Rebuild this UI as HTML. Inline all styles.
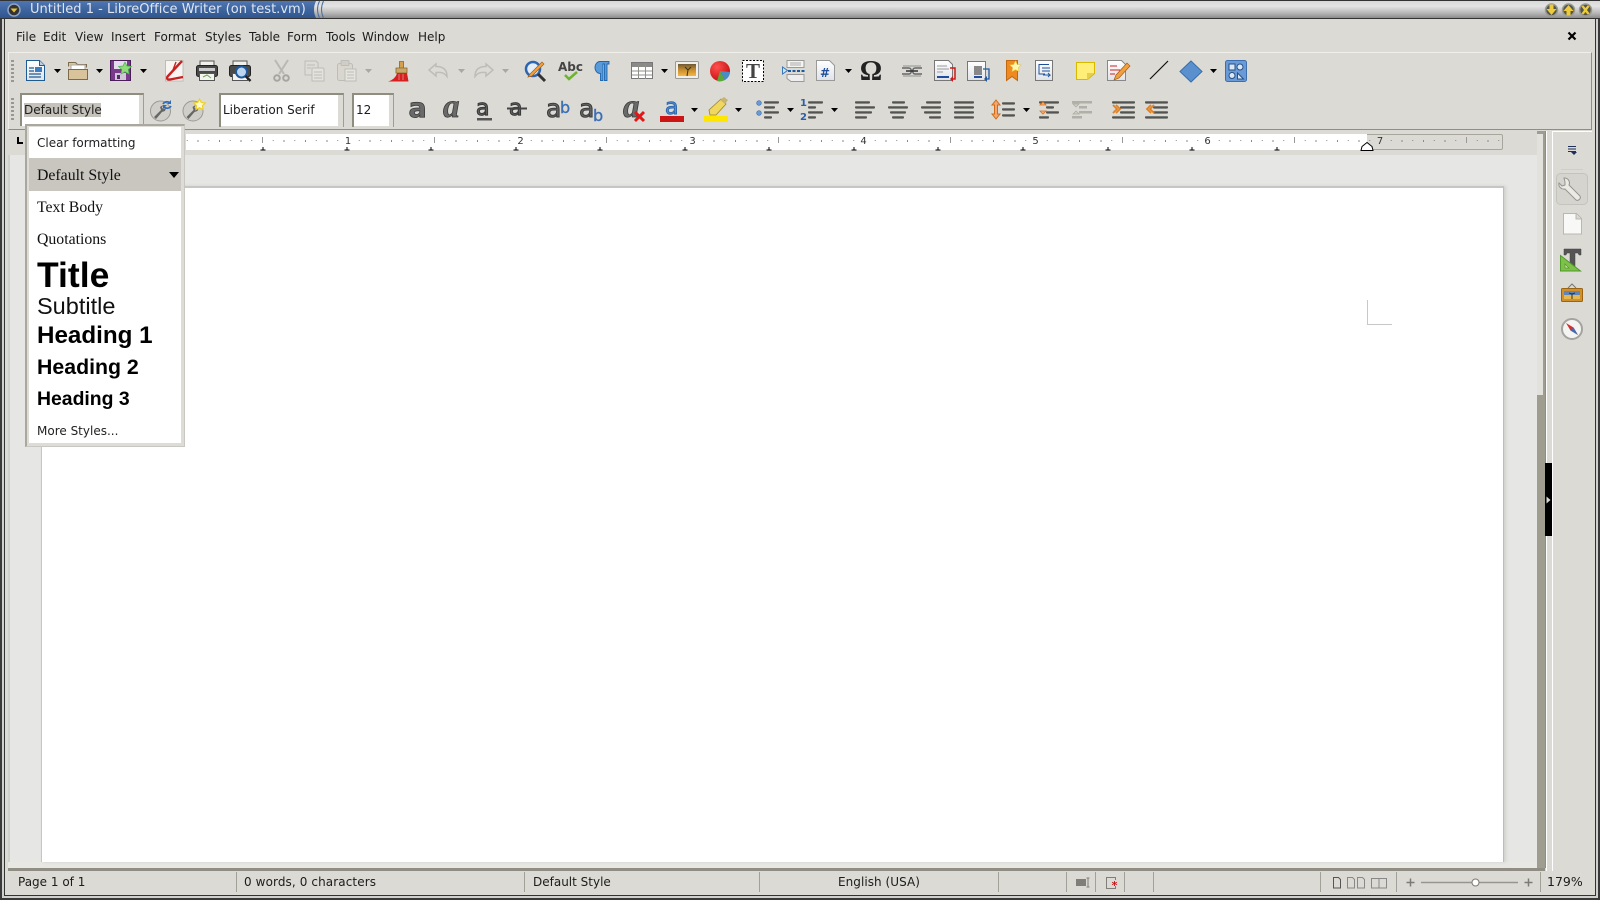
<!DOCTYPE html>
<html><head><meta charset="utf-8"><title>Untitled 1 - LibreOffice Writer</title>
<style>
html,body{margin:0;padding:0;width:1600px;height:900px;overflow:hidden;background:#3a3a3a}
body{position:relative;font-family:"DejaVu Sans",sans-serif;font-size:12px;color:#1c1c1c}
.a{position:absolute}
.t{position:absolute;white-space:nowrap;line-height:20px;height:20px}
.s{font-family:"Liberation Serif",serif;font-size:15.800px;color:#111}
.b{font-family:"Liberation Sans",sans-serif;font-weight:bold;color:#000}
.sep{position:absolute;top:872px;height:20px;width:1px;background:#a3a197}
svg{position:absolute;left:0;top:0}
</style></head><body>
<!-- window frame -->
<div class="a" style="left:2px;top:18px;width:1596px;height:880px;background:#d0d0cc"></div>
<div class="a" style="left:4px;top:18px;width:1592px;height:878px;background:#333"></div>
<div class="a" style="left:5px;top:19px;width:1590px;height:876px;background:#dbdad5"></div>
<!-- title bar -->
<div class="a" style="left:0;top:0;width:1600px;height:19px;background:linear-gradient(#d8d8d8,#e4e4e4 30%,#b8b8b8 70%,#8c8c8c);border-top:1px solid #333;border-bottom:1px solid #333;box-sizing:border-box"></div>
<svg width="340" height="20" viewBox="0 0 340 20" style="width:340px;height:20px">
<defs><linearGradient id="tb" x1="0" y1="0" x2="0" y2="1"><stop offset="0" stop-color="#4f76b2"/><stop offset=".5" stop-color="#3f659f"/><stop offset="1" stop-color="#2f5590"/></linearGradient></defs>
<path d="M0 1H316q-4 8.500 0 17H0z" fill="url(#tb)"/>
<path d="M319.500 1q-4 8.500 0 17M323.500 1q-4 8.500 0 17" stroke="#4a6ea6" fill="none"/>
</svg>
<div class="t" style="left:30px;top:0px;font-size:13px;color:#dfe6f2;letter-spacing:.02px">Untitled 1 - LibreOffice Writer (on test.vm)</div>
<!-- menu -->
<div class="t" style="left:16px;top:27px">File</div>
<div class="t" style="left:43px;top:27px">Edit</div>
<div class="t" style="left:75px;top:27px">View</div>
<div class="t" style="left:111px;top:27px">Insert</div>
<div class="t" style="left:154px;top:27px">Format</div>
<div class="t" style="left:205px;top:27px">Styles</div>
<div class="t" style="left:249px;top:27px">Table</div>
<div class="t" style="left:287px;top:27px">Form</div>
<div class="t" style="left:326px;top:27px">Tools</div>
<div class="t" style="left:362px;top:27px">Window</div>
<div class="t" style="left:418px;top:27px">Help</div>
<!-- toolbar frame -->
<div class="a" style="left:8px;top:52px;width:1584px;height:78px;box-sizing:border-box;border-top:1px solid #f0efea;border-left:1px solid #efeee9;border-right:1px solid #8f8d84;border-bottom:1px solid #8f8d84"></div>
<!-- combos -->
<div class="a" style="left:20px;top:93px;width:124px;height:33px;background:#dcdbd6;box-sizing:border-box;border-left:2px solid #8f8c80;border-top:2px solid #8f8c80;border-right:1px solid #a09e92"></div>
<div class="a" style="left:22px;top:95px;width:117px;height:31px;background:#fff"></div>
<div class="a" style="left:24px;top:103px;width:77px;height:14px;background:#c5c2bb"></div>
<div class="t" style="left:24px;top:100px">Default Style</div>
<div class="a" style="left:219px;top:93px;width:125px;height:34px;background:#dcdbd6;box-sizing:border-box;border-left:2px solid #8f8c80;border-top:2px solid #8f8c80;border-right:1px solid #a09e92"></div>
<div class="a" style="left:221px;top:95px;width:117px;height:31px;background:#fff"></div>
<div class="t" style="left:223px;top:100px">Liberation Serif</div>
<div class="a" style="left:352px;top:93px;width:42px;height:34px;background:#dcdbd6;box-sizing:border-box;border-left:2px solid #8f8c80;border-top:2px solid #8f8c80;border-right:1px solid #a09e92"></div>
<div class="a" style="left:354px;top:95px;width:35px;height:31px;background:#fff"></div>
<div class="t" style="left:356px;top:100px">12</div>
<!-- doc area -->
<div class="a" style="left:8px;top:155px;width:1529px;height:707px;background:#e6e6e4"></div>
<div class="a" style="left:8px;top:155px;width:2px;height:707px;background:#cfcfcb"></div>
<div class="a" style="left:8px;top:862px;width:1537px;height:6px;background:#e8e7e2"></div>
<div class="a" style="left:8px;top:868px;width:1537px;height:3px;background:#8f8d84"></div>
<div class="a" style="left:41px;top:186px;width:1463px;height:676px;background:#fff;box-sizing:border-box;border-left:1px solid #c6c6c2;border-top:2px solid #c6c6c2;border-right:1px solid #bcbcb8;box-shadow:2px 0 3px #d0d0cc"></div>
<div class="a" style="left:1367px;top:300px;width:25px;height:25px;box-sizing:border-box;border-left:1px solid #c8c8c8;border-bottom:1px solid #c8c8c8"></div>
<!-- ruler -->
<div class="a" style="left:186px;top:134px;width:1181px;height:16px;background:#fff"></div>
<div class="a" style="left:1367px;top:134px;width:136px;height:16px;box-sizing:border-box;border:1px solid #a8a69c;border-left:0;border-radius:0 2px 2px 0"></div>
<!-- scroll column -->
<div class="a" style="left:1537px;top:131px;width:6px;height:264px;background:#e2e1dc"></div>
<div class="a" style="left:1537px;top:131px;width:7px;height:3px;background:#9f9c90"></div>
<div class="a" style="left:1543px;top:131px;width:2px;height:264px;background:#9f9c90"></div>
<div class="a" style="left:1537px;top:395px;width:8px;height:473px;background:#9f9c90"></div>
<div class="a" style="left:1545px;top:131px;width:1px;height:737px;background:#8f8d84"></div>
<div class="a" style="left:1546px;top:131px;width:1px;height:740px;background:#fff"></div>
<div class="a" style="left:1552px;top:131px;width:1px;height:740px;background:#fff"></div>
<div class="a" style="left:1552px;top:131px;width:40px;height:1px;background:#fff"></div>
<div class="a" style="left:1545px;top:463px;width:7px;height:73px;background:#000"></div>
<!-- status bar -->
<div class="t" style="left:18px;top:872px">Page 1 of 1</div>
<div class="t" style="left:244px;top:872px;letter-spacing:.1px">0 words, 0 characters</div>
<div class="t" style="left:533px;top:872px">Default Style</div>
<div class="t" style="left:838px;top:872px;letter-spacing:.05px">English (USA)</div>
<div class="t" style="left:1547px;top:872px;font-size:12.500px">179%</div>
<div class="sep" style="left:236px"></div><div class="sep" style="left:524px"></div><div class="sep" style="left:759px"></div><div class="sep" style="left:998px"></div><div class="sep" style="left:1066px"></div><div class="sep" style="left:1095px"></div><div class="sep" style="left:1124px"></div><div class="sep" style="left:1153px"></div><div class="sep" style="left:1320px"></div><div class="sep" style="left:1396px"></div><div class="sep" style="left:1540px"></div>

<svg width="1600" height="900" viewBox="0 0 1600 900" xmlns="http://www.w3.org/2000/svg">
<defs>
<pattern id="rt" patternUnits="userSpaceOnUse" x="176" y="134" width="172" height="16">
<g fill="#8a8a86"><rect x="10.750" y="6" width="1" height="1"/><rect x="21.500" y="6" width="1" height="2"/><rect x="32.250" y="6" width="1" height="1"/><rect x="43" y="6" width="1" height="2"/><rect x="53.750" y="6" width="1" height="1"/><rect x="64.500" y="6" width="1" height="2"/><rect x="75.250" y="6" width="1" height="1"/><rect x="86" y="3" width="1" height="6" fill="#999"/><rect x="96.750" y="6" width="1" height="1"/><rect x="107.500" y="6" width="1" height="2"/><rect x="118.250" y="6" width="1" height="1"/><rect x="129" y="6" width="1" height="2"/><rect x="139.750" y="6" width="1" height="1"/><rect x="150.500" y="6" width="1" height="2"/><rect x="161.250" y="6" width="1" height="1"/></g>
</pattern>
<path id="dd" d="M0 0h7l-3.500 4z" fill="#000"/>
<linearGradient id="pg" x1="0" y1="0" x2="0" y2="1"><stop offset="0" stop-color="#fff"/><stop offset="1" stop-color="#dfe3e8"/></linearGradient>
<linearGradient id="ln" x1="0" y1="0" x2="0" y2="1"><stop offset="0" stop-color="#8a8a86"/><stop offset="1" stop-color="#2e2e2e"/></linearGradient>
<linearGradient id="sun" x1="0" y1="0" x2="0" y2="1"><stop offset="0" stop-color="#6e5a34"/><stop offset=".5" stop-color="#c98e30"/><stop offset="1" stop-color="#f4b848"/></linearGradient>
<radialGradient id="rd" cx=".35" cy=".3" r=".8"><stop offset="0" stop-color="#ff5050"/><stop offset="1" stop-color="#c00a0a"/></radialGradient>
</defs>

<!-- title buttons -->
<g>
<circle cx="14" cy="10" r="6" fill="#333" stroke="#8ea3c6" stroke-width="1.500"/><path d="M10.500 8.500h7l-3.500 4z" fill="#e6c23a"/>
<g stroke="#9a9a90" stroke-width="1.500"><circle cx="1551.500" cy="10" r="6" fill="#55554a"/><circle cx="1568.500" cy="10" r="6" fill="#55554a"/><circle cx="1585.500" cy="10" r="6" fill="#55554a"/></g>
<path d="M1549.500 4.500h4v4.500h3l-5 6-5-6h3z" fill="#eccb3e"/><path d="M1566.500 15.500h4v-4.500h3l-5-6-5 6h3z" fill="#eccb3e"/><path d="M1581.500 6.500l2-1 2 2.500 2-2.500 2 1-2.500 3.500 2.500 3.500-2 1-2-2.500-2 2.500-2-1 2.500-3.500z" fill="#eccb3e"/>
</g>
<!-- menu close -->
<path d="M1568.500 32.500l7 7m0-7l-7 7" stroke="#000" stroke-width="2.200" fill="none"/>
<!-- grips -->
<g fill="#9a988e"><rect x="11" y="60" width="3" height="2"/><rect x="11" y="64" width="3" height="2"/><rect x="11" y="68" width="3" height="2"/><rect x="11" y="72" width="3" height="2"/><rect x="11" y="76" width="3" height="2"/><rect x="11" y="80" width="3" height="2"/>
<rect x="11" y="98" width="3" height="2"/><rect x="11" y="102" width="3" height="2"/><rect x="11" y="106" width="3" height="2"/><rect x="11" y="110" width="3" height="2"/><rect x="11" y="114" width="3" height="2"/><rect x="11" y="118" width="3" height="2"/></g>

<!-- row 1 -->
<!-- new -->
<path d="M26.500 60.500h13l5 5v15h-18z" fill="url(#pg)" stroke="#1d5b94"/><path d="M39.500 60.500v5h5" fill="#bcd0e4" stroke="#1d5b94"/>
<path d="M29 68h5M29 71h5M29 74h12M29 77h12" stroke="#1d5b94" stroke-width="1.300"/><rect x="35" y="67" width="7" height="5" fill="#3b7ec0"/>
<use href="#dd" x="54" y="69"/>
<!-- open -->
<path d="M68.500 66.500v-4h7l2 2h9v3" fill="#d8c6a2" stroke="#7d6a4a"/><rect x="71" y="65" width="14" height="7" fill="#fff" stroke="#aaa"/><path d="M68.500 69.500h19v10h-19z" fill="#d9c39a" stroke="#7d6a4a"/>
<use href="#dd" x="96" y="69"/>
<!-- save -->
<rect x="110.500" y="60.500" width="20" height="20" fill="#7a3a8c" stroke="#4a1c5c"/><rect x="114" y="61" width="13" height="8" fill="#e4dcec"/><rect x="115" y="73" width="11" height="7" fill="#cfc8d4"/><rect x="117" y="75" width="3" height="4" fill="#5a2a6a"/>
<path d="M125 62l2 4 4.500.500-3.300 3 .800 4.500-4-2.200-4 2.200.800-4.500-3.300-3 4.500-.500z" fill="#8fdc78" stroke="#4caf50" stroke-width=".7"/>
<use href="#dd" x="140" y="69"/>
<!-- pdf -->
<path d="M165.500 60.500h17.500v20.500h-17.500z" fill="#f7f4f2" stroke="#bdbcb6"/><path d="M182 61L167.500 76.500Q166 80 170 79.500L183 77" fill="none" stroke="#c92020" stroke-width="2.400"/><path d="M176 62l-3 8" stroke="#c92020" stroke-width="1.400"/>
<!-- print -->
<g><path d="M200 61h14v6h-14z" fill="#f0f0ec" stroke="#555"/><rect x="196.500" y="65.500" width="21" height="11" rx="2" fill="#4a4a48" stroke="#222"/><rect x="199" y="68" width="16" height="3" fill="#ccc"/><path d="M199.500 73.500h15v7h-15z" fill="#f4f4f0" stroke="#555"/><path d="M203 77l4-2 4 3" stroke="#6aa84f" fill="none"/></g>
<!-- preview -->
<path d="M233 61h14v6h-14z" fill="#f0f0ec" stroke="#555"/><rect x="229.500" y="65.500" width="21" height="11" rx="2" fill="#4a4a48" stroke="#222"/><path d="M232.500 73.500h15v7h-15z" fill="#f4f4f0" stroke="#555"/><circle cx="241.500" cy="72" r="5.500" fill="#bcd6ee" stroke="#1f5a9e" stroke-width="2"/><path d="M245.500 76l5 5" stroke="#222" stroke-width="2.500"/>
<!-- cut -->
<g fill="none" stroke="#b9b8b2" stroke-width="2"><path d="M275 60l9 14M288 60l-9 14"/><circle cx="277" cy="78" r="2.800" stroke="#a6a5a0"/><circle cx="286" cy="78" r="2.800" stroke="#a6a5a0"/></g>
<!-- copy -->
<path d="M305 61h11l2 2v12h-13z" fill="#dedcd6" stroke="#bdbcb6"/><path d="M312 68h11l1 1v12h-12z" fill="#e4e2dc" stroke="#bdbcb6"/><path d="M307 65h8M307 68h4M314 72h8M314 75h8M314 78h8" stroke="#bdbcb6"/>
<!-- paste -->
<rect x="337.500" y="63.500" width="15" height="17" rx="2" fill="#d8d6cf" stroke="#bdbcb6"/><rect x="341" y="60.500" width="8" height="5" rx="1" fill="#cfcdc6" stroke="#bdbcb6"/><path d="M345 69h11v12h-11z" fill="#e6e4de" stroke="#bdbcb6"/><path d="M347 72h7M347 75h7M347 78h7" stroke="#bdbcb6"/>
<path d="M365 69h7l-3.500 4z" fill="#a9a8a2"/>
<!-- brush -->
<path d="M399.500 61.500h4v7h-4z" fill="#d4a050" stroke="#8a6428" stroke-width=".8"/><path d="M396 68h11v5h-11z" fill="#c9a86a" stroke="#8a6428" stroke-width=".8"/><path d="M397 73h10l1.500 8.500h-20.500c4-1 8-4 9-8.500z" fill="#d42020"/><path d="M399 74v6M403 74v6" stroke="#e8a0a0" stroke-width=".7"/>
<!-- undo redo -->
<g fill="#dcdbd6" stroke="#bebdb7" stroke-width="1.500"><path d="M436 64l-7 6 7 6v-3.500c5-.5 8 0 11 4 0-7-4-10-11-10z"/><path d="M486 64l7 6-7 6v-3.500c-5-.5-8 0-11 4 0-7 4-10 11-10z"/></g>
<path d="M458 69h7l-3.500 4zM502 69h7l-3.500 4z" fill="#a9a8a2"/>
<!-- find -->
<circle cx="533" cy="69" r="7" fill="#e4eef8" stroke="#2d66b0" stroke-width="2.500"/><path d="M538 74l7 7" stroke="#333" stroke-width="3"/><path d="M530 74l12-12 2 2-12 12-4 1z" fill="#f0a040" stroke="#a85a10" stroke-width=".7"/>
<!-- spell -->
<text x="558" y="71" font-family="DejaVu Sans,sans-serif" font-size="12" font-weight="bold" fill="#444">Abc</text><path d="M565 75l4 4 8-7" stroke="#6cb52d" stroke-width="2.500" fill="none"/>
<!-- pilcrow -->
<path d="M609 61.500h-9a5 6 0 0 0 0 12h0.500v7h2.500v-16.500h1.500v16.500h2.500v-16.500h2z" fill="#5a9ad8" stroke="#1e66ae" stroke-width=".9"/>
<!-- table -->
<rect x="631.500" y="62.500" width="21" height="16" fill="#fff" stroke="#777"/><rect x="632" y="63" width="20" height="4" fill="#8a8a86"/><path d="M632 71h20M632 75h20M638.500 63v16M645.500 63v16" stroke="#8f8f8b"/>
<use href="#dd" x="661" y="69"/>
<!-- image -->
<rect x="675.500" y="61.500" width="23" height="17" rx="1" fill="#f0efe8" stroke="#999"/><rect x="678" y="64" width="18" height="12" fill="url(#sun)"/><path d="M687 76l1-6 3-3m-3 3l-3-3" stroke="#332" fill="none"/>
<!-- chart -->
<circle cx="720" cy="71" r="10" fill="url(#rd)"/><path d="M720 71l10 1a10 10 0 0 1-5 8z" fill="#4a8bc8"/><path d="M720 71l5 9a10 10 0 0 1-8 1z" fill="#5aa83c"/>
<!-- textbox -->
<rect x="742.500" y="60.500" width="21" height="21" fill="#fff" stroke="#000" stroke-dasharray="2 1.500"/><text x="753" y="78" text-anchor="middle" font-family="Liberation Serif,serif" font-size="21" font-weight="bold" fill="#444">T</text>
<!-- page break -->
<path d="M787 60.500h17v7h-17z" fill="#f4f4f0" stroke="#999"/><path d="M790 63h11M790 65h11" stroke="#aaa"/><path d="M787 74.500h17v7h-13l-4-3z" fill="#eee" stroke="#999"/>
<path d="M782.500 67v7l5-3.500z" fill="#d0e4f6" stroke="#3a78b8"/><path d="M788 71h17" stroke="#1f5a9e" stroke-width="2" stroke-dasharray="3 1.500"/>
<!-- field -->
<path d="M816.500 60.500h13l5 5v15h-18z" fill="url(#pg)" stroke="#999"/><text x="825" y="77" text-anchor="middle" font-family="DejaVu Sans,sans-serif" font-size="12" font-weight="bold" fill="#1f4f9a">#</text>
<use href="#dd" x="845" y="69"/>
<!-- omega -->
<text x="871" y="80" text-anchor="middle" font-family="Liberation Serif,serif" font-size="28" font-weight="bold" fill="#222">Ω</text>
<!-- link -->
<g fill="none" stroke="#666" stroke-width="1.500"><path d="M902 68h7c3 0 3 6 0 6h-7M922 68h-7c-3 0-3 6 0 6h7"/><path d="M906 71h12" stroke="#333"/><path d="M903 66h18M903 76h18" stroke="#aaa"/></g>
<!-- footnote -->
<path d="M934.500 60.500h14l4 4v16h-18z" fill="url(#pg)" stroke="#777"/><path d="M937 66h10M937 69h12M937 72h6" stroke="#999"/><rect x="937" y="76" width="12" height="2" fill="#1f4f9a"/><path d="M950 68h5v11h-4" fill="none" stroke="#d01818" stroke-width="1.500"/><path d="M953 76v6l-3-3z" fill="#d01818"/>
<!-- endnote -->
<rect x="967.500" y="61.500" width="18" height="19" fill="url(#pg)" stroke="#777"/><rect x="974" y="66" width="8" height="9" fill="#888"/><rect x="974" y="76" width="8" height="2" fill="#1f4f9a"/><path d="M983 69h6v10h-4" fill="none" stroke="#1f5a9e" stroke-width="1.300"/><path d="M987 76v6l-3-3z" fill="#1f5a9e"/>
<!-- bookmark -->
<path d="M1006.500 60.500h11v20l-5.500-4-5.500 4z" fill="#f08a20" stroke="#c06810"/><path d="M1015.500 61l1.800 3.500 3.800.5-2.800 2.700.7 3.800-3.500-1.800-3.500 1.800.7-3.800-2.800-2.700 3.800-.5z" fill="#fff6b0" stroke="#e8c840" stroke-width=".6"/>
<!-- xref -->
<rect x="1035.500" y="60.500" width="17" height="20" fill="url(#pg)" stroke="#777"/><path d="M1039 64.500h10M1039 64v10h6M1042 68h8M1042 71h8" stroke="#1f4f9a" fill="none"/><path d="M1043 75h7l-2-2m2 2l-2 2" stroke="#1f5a9e" fill="none"/>
<!-- note -->
<path d="M1076.500 62.500h18v11l-7 6h-11z" fill="#ffef78" stroke="#d9b800"/><path d="M1094 73h-7v7z" fill="#e4d050"/>
<!-- track -->
<path d="M1107.500 60.500h14l4 4v16h-18z" fill="url(#pg)" stroke="#888"/><path d="M1110 66h7M1110 70h10M1110 74h5" stroke="#d02020"/><path d="M1114 80l2-5 11-12 3 3-11 12z" fill="#f0a040" stroke="#a85a10" stroke-width=".7"/>
<!-- line -->
<path d="M1150 79l18-18" stroke="#111" stroke-width="1.200"/>
<!-- diamond -->
<path d="M1191 61l11 10.500-11 10.500-11-10.500z" fill="#5b90cf" stroke="#386fa8"/>
<use href="#dd" x="1210" y="69"/>
<!-- shapes -->
<rect x="1225.500" y="60.500" width="21" height="21" rx="2" fill="#6b9bd6" stroke="#3d6fae"/><rect x="1229" y="64" width="6" height="6" fill="#dbe7f4" stroke="#274f86"/><circle cx="1240" cy="67" r="3" fill="#dbe7f4" stroke="#274f86"/><circle cx="1232" cy="75.500" r="3" fill="#dbe7f4" stroke="#274f86"/><path d="M1237.500 79v-6l6 6z" fill="#dbe7f4" stroke="#274f86"/>

<!-- row 2 -->
<!-- style buttons -->
<circle cx="160.500" cy="111" r="10" fill="#cfcec8" stroke="#9a9a94"/><path d="M154 117l7-7-1-3 3-2-1 3 2 1 2-1-1 3-3 1-6 7z" fill="#666"/><path d="M163 104a4.500 4.500 0 0 1 7-1M171 106a4.500 4.500 0 0 1-7 1" stroke="#2c6cc0" stroke-width="1.700" fill="none"/><path d="M171 100v4h-4zM163 109v-4h4z" fill="#2c6cc0"/>
<circle cx="193" cy="111" r="10" fill="#cfcec8" stroke="#9a9a94"/><path d="M186.500 117l7-7-1-3 3-2-1 3 2 1 2-1-1 3-3 1-6 7z" fill="#666"/><path d="M199.500 99l1.800 3.500 3.900.500-2.800 2.700.7 3.800-3.600-1.800-3.600 1.800.7-3.800-2.800-2.700 3.900-.5z" fill="#fffbd0" stroke="#f0d020" stroke-width="1.200"/>
<!-- format letters -->
<g font-family="DejaVu Sans,sans-serif" font-weight="bold" font-size="27" fill="#6a6a6a" stroke="#3c3c3c" stroke-width=".8">
<text x="408.500" y="117">a</text>
<text x="443" y="117" font-family="Liberation Serif,serif" font-style="italic" font-size="33">a</text>
<text x="476" y="115" font-size="22" font-weight="normal" stroke-width="1.200">a</text>
<text x="509" y="115" font-size="22" font-weight="normal" stroke-width="1.200">a</text>
<text x="546" y="117" font-size="25" font-weight="normal" stroke-width="1.100">a</text>
<text x="579" y="117" font-size="25" font-weight="normal" stroke-width="1.100">a</text>
<text x="623" y="117" font-family="Liberation Serif,serif" font-style="italic" font-size="33">a</text>
<text x="665" y="114" font-size="22" font-weight="normal" fill="#5a8fcd" stroke="#2f6ab0" stroke-width="1">a</text>
</g>
<text x="560" y="113" font-family="DejaVu Sans,sans-serif" font-size="16" fill="#3a6fb5" stroke="#3a6fb5" stroke-width=".4">b</text>
<text x="593" y="121" font-family="DejaVu Sans,sans-serif" font-size="16" fill="#3a6fb5" stroke="#3a6fb5" stroke-width=".4">b</text>
<rect x="477" y="118" width="15" height="2.500" fill="#555"/>
<path d="M507 108.500h20" stroke="#444" stroke-width="2"/>
<path d="M635 112l9 9m0-9l-9 9" stroke="#e01818" stroke-width="3"/>
<rect x="660" y="116" width="24" height="6" fill="#cc1515"/>
<use href="#dd" x="691" y="108"/>
<path d="M709 110l12-11 5 5-10 11h-6z" fill="#f0d860" stroke="#9c8420" stroke-width=".8"/><path d="M720 100l4-3 4 3-3 4z" fill="#c8b470"/>
<rect x="704" y="116" width="24" height="6" fill="#ffe600"/>
<use href="#dd" x="735" y="108"/>
<!-- bullets -->
<circle cx="759" cy="103" r="2.300" fill="#6a9bd6" stroke="#3a6fb0" stroke-width=".7"/><circle cx="759" cy="113" r="2.300" fill="#6a9bd6" stroke="#3a6fb0" stroke-width=".7"/>
<g fill="url(#ln)"><rect x="764" y="101" width="15" height="2.500" rx="1"/><rect x="764" y="106" width="11" height="2.500" rx="1"/><rect x="764" y="111" width="15" height="2.500" rx="1"/><rect x="764" y="116" width="8" height="2.500" rx="1"/>
<rect x="808" y="101" width="15" height="2.500" rx="1"/><rect x="808" y="106" width="8" height="2.500" rx="1"/><rect x="808" y="111" width="15" height="2.500" rx="1"/><rect x="808" y="116" width="8" height="2.500" rx="1"/>
<rect x="855" y="101" width="15" height="2.500" rx="1"/><rect x="855" y="106" width="20" height="2.500" rx="1"/><rect x="855" y="111" width="17" height="2.500" rx="1"/><rect x="855" y="116" width="12" height="2.500" rx="1"/>
<rect x="892" y="101" width="13" height="2.500" rx="1"/><rect x="888" y="106" width="20" height="2.500" rx="1"/><rect x="890" y="111" width="16" height="2.500" rx="1"/><rect x="892" y="116" width="12" height="2.500" rx="1"/>
<rect x="926" y="101" width="15" height="2.500" rx="1"/><rect x="921" y="106" width="20" height="2.500" rx="1"/><rect x="924" y="111" width="17" height="2.500" rx="1"/><rect x="929" y="116" width="12" height="2.500" rx="1"/>
<rect x="954" y="101" width="20" height="2.500" rx="1"/><rect x="954" y="106" width="20" height="2.500" rx="1"/><rect x="954" y="111" width="20" height="2.500" rx="1"/><rect x="954" y="116" width="20" height="2.500" rx="1"/>
<rect x="1002" y="102" width="13" height="2.500" rx="1"/><rect x="1002" y="108" width="13" height="2.500" rx="1"/><rect x="1002" y="114" width="13" height="2.500" rx="1"/>
<rect x="1039" y="101" width="20" height="2.500" rx="1"/><rect x="1046" y="106" width="8" height="2.500" rx="1"/><rect x="1046" y="111" width="13" height="2.500" rx="1"/><rect x="1039" y="116" width="10" height="2.500" rx="1"/>
<rect x="1112" y="101" width="23" height="2.500" rx="1"/><rect x="1120" y="106" width="15" height="2.500" rx="1"/><rect x="1120" y="111" width="15" height="2.500" rx="1"/><rect x="1112" y="116" width="23" height="2.500" rx="1"/>
<rect x="1145" y="101" width="23" height="2.500" rx="1"/><rect x="1153" y="106" width="15" height="2.500" rx="1"/><rect x="1153" y="111" width="15" height="2.500" rx="1"/><rect x="1145" y="116" width="23" height="2.500" rx="1"/></g>
<g fill="#b0afa8"><rect x="1072" y="101" width="20" height="2.500"/><rect x="1079" y="106" width="8" height="2.500"/><rect x="1079" y="111" width="13" height="2.500"/><rect x="1072" y="116" width="10" height="2.500"/></g>
<path d="M1073 104h6l-3 3zM1073 114h6l-3-3z" fill="#cfcec8" stroke="#a8a7a0" stroke-width=".7"/>
<text x="800" y="106" font-family="DejaVu Sans,sans-serif" font-size="10" font-weight="bold" fill="#2a5fa8">1</text><text x="800" y="120" font-family="DejaVu Sans,sans-serif" font-size="10" font-weight="bold" fill="#2a5fa8">2</text>
<use href="#dd" x="787" y="108"/><use href="#dd" x="831" y="108"/><use href="#dd" x="1023" y="108"/>
<path d="M996 100l4 5h-2.500v9h2.500l-4 5-4-5h2.500v-9h-2.500z" fill="#f0a870" stroke="#d06a18" stroke-width="1"/>
<path d="M1040 105h6l-3-3zM1040 111h6l-3 3z" fill="#f4b070" stroke="#d87020" stroke-width=".8"/>
<path d="M1113 105l4 4-4 4M1116 105l4 4-4 4" stroke="#e08020" stroke-width="1.800" fill="none"/>
<path d="M1151 105l-4 4 4 4M1154 105l-4 4 4 4" stroke="#e08020" stroke-width="1.800" fill="none"/>

<!-- ruler marks -->
<rect x="186" y="134" width="1317" height="16" fill="url(#rt)"/>
<g font-family="DejaVu Sans,sans-serif" font-size="10" fill="#333" text-anchor="middle"><text x="348" y="144">1</text><text x="520.500" y="144">2</text><text x="692.500" y="144">3</text><text x="863.500" y="144">4</text><text x="1035.500" y="144">5</text><text x="1207.500" y="144">6</text><text x="1380" y="144">7</text></g>
<path d="M260.500 150h5M263 147v3M344.500 150h5M347 147v3M428.500 150h5M431 147v3M513.500 150h5M516 147v3M597.500 150h5M600 147v3M682.500 150h5M685 147v3M766.500 150h5M769 147v3M851.500 150h5M854 147v3M935.500 150h5M938 147v3M1020.500 150h5M1023 147v3M1105.500 150h5M1108 147v3M1189.500 150h5M1192 147v3M1274.500 150h5M1277 147v3" stroke="#000" stroke-width="1" fill="none"/>
<path d="M1361 150.500h12l-1-4-5-4-5 4z" fill="#fff" stroke="#000"/>
<!-- tab corner -->
<path d="M17 137h2v5h4v2h-6z" fill="#000"/>
<!-- scroll handle arrow -->
<path d="M1546.500 496.500v7l4-3.500z" fill="#d8d8d0"/>

<!-- sidebar -->
<path d="M1568 146.500h8M1568 149h8M1568 151.500h8" stroke="#1f2f5a" stroke-width="1"/><path d="M1571 152h6l-3 3z" fill="#1f2f5a"/>
<path d="M1561 169.500h22" stroke="#cfcec8"/>
<rect x="1556.500" y="173.500" width="31" height="31" rx="4" fill="#d5d4cf" stroke="#c4c3bd"/>
<path d="M1564 178a5 5 0 0 1 5 7l11 11a3 3 0 0 1-4 4l-11-11a5 5 0 0 1-6-6l3 3 3-1 0-3z" fill="#eceae4" stroke="#95948e"/>
<path d="M1563.500 213.500h13l5 5v15.500h-18z" fill="#f8f8f6" stroke="#b8b7b1"/><path d="M1576 214v5h5" fill="#d8d8d4" stroke="#b8b7b1"/>
<path d="M1564 249h17v6h-2l-1-2h-3v17h-5v-17h-3l-1 2h-2z" fill="#555" stroke="#444" stroke-width=".5"/>
<path d="M1560.500 255.500v15.500h20z" fill="#7fc04a" stroke="#4f9a28"/><path d="M1565 264v4h4z" fill="#c8e8a8" stroke="#4f9a28" stroke-width=".7"/>
<rect x="1561.500" y="288.500" width="21" height="13" rx="1" fill="#d0902c" stroke="#9a6414"/><rect x="1564" y="291" width="16" height="8" fill="#e8b850"/><rect x="1564" y="291" width="16" height="4" fill="#5f86b8"/><path d="M1572 299v-5l-3-1m3 1l3-1" stroke="#332" fill="none"/><path d="M1568 288l4-4 4 4" stroke="#777" fill="none"/>
<circle cx="1572" cy="329" r="10" fill="#f4f4f2" stroke="#a4a3a0" stroke-width="2"/><path d="M1566 323l7.500 4.500 4.500 7.500-7.500-4.500z" fill="#d03030"/><path d="M1573.500 327.500l4.500 7.500-7.500-4.500z" fill="#3a6fb8"/>

<!-- status icons -->
<rect x="1076" y="879" width="10" height="7" fill="#7f7e78"/><path d="M1088 878v9M1086.500 878h3M1086.500 887h3" stroke="#7f7e78"/>
<rect x="1106.500" y="877.500" width="9" height="11" fill="none" stroke="#7f7e78"/><rect x="1112" y="880" width="7" height="6" fill="#dbdad5"/><text x="1114.500" y="889" text-anchor="middle" font-family="DejaVu Sans,sans-serif" font-size="11" font-weight="bold" fill="#c01818">*</text>
<g fill="none" stroke="#555"><path d="M1333.500 877.500h5l2 2v8.500h-7z"/><path d="M1347.500 877.500h5l2 2v8.500h-7zM1357.500 877.500h5l2 2v8.500h-7z" stroke="#888"/><path d="M1371.500 878.500h7.500v9.500h-7.500zM1379 878.500h7.500v9.500h-7.500z" stroke="#888"/></g>
<path d="M1406.500 882.500h8M1410.500 878.500v8M1524.500 882.500h8M1528.500 878.500v8" stroke="#7c7b75" stroke-width="1.500"/>
<path d="M1421 882.500h97" stroke="#96958f" stroke-width="1.500"/>
<circle cx="1475.500" cy="882.500" r="3.500" fill="#fff" stroke="#7c7b75"/>
</svg>

<!-- style popup -->
<div class="a" style="left:25px;top:124px;width:160px;height:323px;box-sizing:border-box;background:#dddcd7;border-left:2px solid #aaa89e;border-top:2px solid #aaa89e;border-right:1px solid #c8c7c1;border-bottom:1px solid #c8c7c1"></div>
<div class="a" style="left:29px;top:127px;width:152px;height:316px;background:#fff"></div>
<div class="a" style="left:29px;top:158px;width:152px;height:33px;background:#c9c6bf"></div>
<div class="t" style="left:37px;top:133px;color:#222">Clear formatting</div>
<div class="t s" style="left:37px;top:166px">Default Style</div>
<div class="t s" style="left:37px;top:198px">Text Body</div>
<div class="t s" style="left:37px;top:230px">Quotations</div>
<div class="t b" style="left:37px;top:265px;font-size:35.500px">Title</div>
<div class="t" style="left:37px;top:296px;font-family:'Liberation Sans',sans-serif;font-size:23.500px;color:#111">Subtitle</div>
<div class="t b" style="left:37px;top:326px;font-size:24.200px">Heading 1</div>
<div class="t b" style="left:37px;top:357px;font-size:21.300px">Heading 2</div>
<div class="t b" style="left:37px;top:389px;font-size:19.400px">Heading 3</div>
<div class="t" style="left:37px;top:421px;color:#222">More Styles...</div>
<svg width="200" height="200" viewBox="0 0 200 200" style="width:200px;height:200px"><path d="M169 172h10l-5 6z" fill="#000"/></svg>
</body></html>
